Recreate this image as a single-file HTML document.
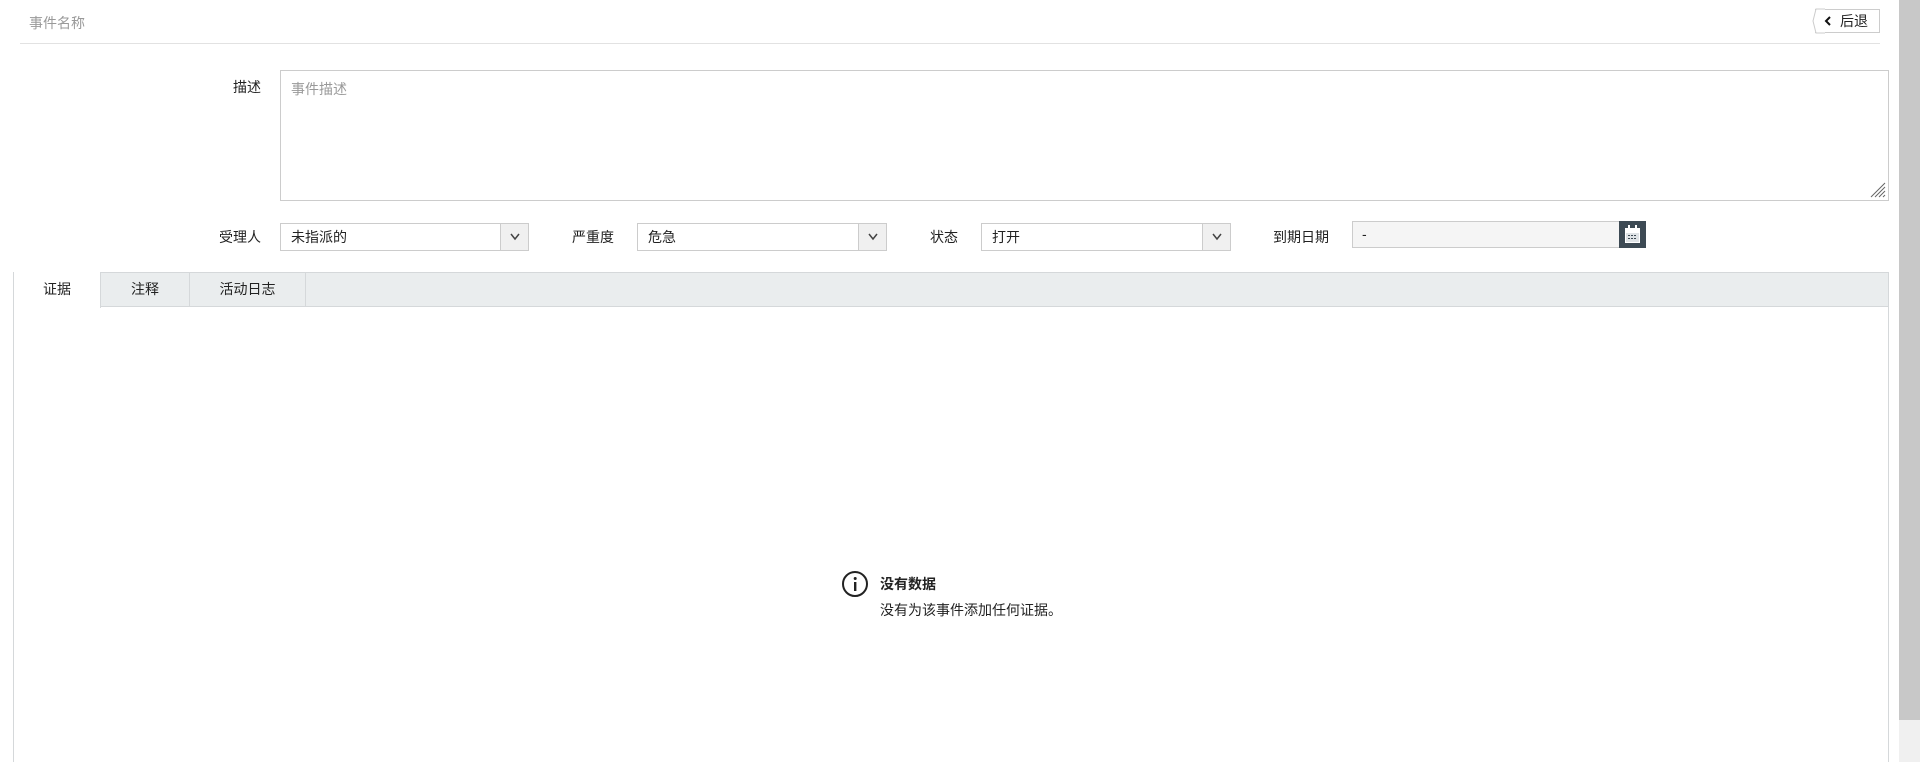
<!DOCTYPE html>
<html style="overflow:hidden;height:762px"><head><meta charset="utf-8"><style>
*{box-sizing:border-box;margin:0;padding:0}
body{width:1920px;height:762px;overflow:hidden;background:#fff;font-family:"Liberation Sans","Noto Sans CJK SC",sans-serif;font-size:14px;color:#222;position:relative}
.a{position:absolute}
.sel{position:absolute;top:223px;height:28px;border:1px solid #ccc;background:#fff;line-height:26px;padding-left:10px}
.sel .ar{position:absolute;right:0;top:0;width:28px;height:26px;background:#f0f0f0;border-left:1px solid #ccc}
.sel .ar svg{position:absolute;left:9px;top:9px}
.lbl{position:absolute;top:223px;line-height:28px}
.tab{position:absolute;top:272px;height:35px;line-height:34px;text-align:center;border-right:1px solid #d5d8da}
</style></head><body>
<div class="a" style="left:29px;top:13px;color:#999;font-size:14px">事件名称</div>
<div class="a" style="left:1815px;top:9px;width:65px;height:24px;border:1px solid #ccc;border-left:none;background:#fff"></div>
<svg class="a" style="left:1812px;top:8px" width="14" height="26"><path d="M13 1 L4 1 L1 13 L4 25 L13 25" fill="#fff" stroke="#ccc"/></svg>
<svg class="a" style="left:1824px;top:16px" width="8" height="10"><path d="M6 1 L2 5 L6 9" fill="none" stroke="#111" stroke-width="2"/></svg>
<div class="a" style="left:1840px;top:11px;line-height:20px;font-size:14px">后退</div>
<div class="a" style="left:20px;top:43px;width:1860px;height:1px;background:#e2e2e2"></div>

<div class="a" style="left:232px;top:77px;width:29px;text-align:right">描述</div>
<div class="a" style="left:280px;top:70px;width:1609px;height:131px;border:1px solid #ccc"></div>
<div class="a" style="left:291px;top:79px;color:#999">事件描述</div>
<svg class="a" style="left:1870px;top:182px" width="16" height="16"><path d="M15 1 L1 15 M15 5 L5 15 M15 9 L9 15 M15 13 L13 15" stroke="#666" stroke-width="1"/></svg>

<div class="lbl" style="left:200px;width:61px;text-align:right">受理人</div>
<div class="sel" style="left:280px;width:249px">未指派的<div class="ar"><svg width="10" height="8"><path d="M1 1 L5 6 L9 1" fill="none" stroke="#444" stroke-width="1.5"/></svg></div></div>
<div class="lbl" style="left:572px">严重度</div>
<div class="sel" style="left:637px;width:250px">危急<div class="ar"><svg width="10" height="8"><path d="M1 1 L5 6 L9 1" fill="none" stroke="#444" stroke-width="1.5"/></svg></div></div>
<div class="lbl" style="left:930px">状态</div>
<div class="sel" style="left:981px;width:250px">打开<div class="ar"><svg width="10" height="8"><path d="M1 1 L5 6 L9 1" fill="none" stroke="#444" stroke-width="1.5"/></svg></div></div>
<div class="lbl" style="left:1273px">到期日期</div>
<div class="a" style="left:1352px;top:221px;width:268px;height:27px;border:1px solid #ccc;background:#f5f5f5;line-height:24px;padding-left:9px">-</div>
<div class="a" style="left:1619px;top:221px;width:27px;height:27px;background:#3d4a54"></div>
<svg class="a" style="left:1623px;top:224px" width="19" height="21"><rect x="2" y="4" width="15" height="15" fill="#fff"/><rect x="3" y="9" width="13" height="9" fill="#dfe3e6"/><rect x="5" y="1" width="2" height="5" fill="#fff"/><rect x="12" y="1" width="2" height="5" fill="#fff"/><g fill="#3d4a54"><rect x="5" y="11" width="2" height="1"/><rect x="8" y="11" width="2" height="1"/><rect x="11" y="11" width="2" height="1"/><rect x="5" y="14" width="2" height="1"/><rect x="8" y="14" width="2" height="1"/><rect x="11" y="14" width="2" height="1"/></g></svg>

<div class="a" style="left:13px;top:272px;width:1876px;height:490px;border:1px solid #d5d8da;border-bottom:none"></div>
<div class="a" style="left:14px;top:273px;width:1874px;height:34px;background:#eaedee;border-bottom:1px solid #d5d8da"></div>
<div class="tab" style="left:14px;width:87px;background:#fff;border-bottom:none;height:36px">证据</div>
<div class="tab" style="left:101px;width:89px">注释</div>
<div class="tab" style="left:190px;width:116px">活动日志</div>

<svg class="a" style="left:841px;top:570px" width="28" height="28"><circle cx="14" cy="14" r="12" fill="none" stroke="#222" stroke-width="2"/><rect x="13" y="12" width="2.4" height="9" fill="#222"/><circle cx="14.2" cy="8.5" r="1.5" fill="#222"/></svg>
<div class="a" style="left:880px;top:574px;font-weight:bold;font-size:14px">没有数据</div>
<div class="a" style="left:880px;top:600px;font-size:14px">没有为该事件添加任何证据。</div>

<div class="a" style="left:1899px;top:0;width:21px;height:720px;background:#c8c8c8"></div>
<div class="a" style="left:1899px;top:720px;width:21px;height:42px;background:#f0f0f0"></div>
</body></html>
